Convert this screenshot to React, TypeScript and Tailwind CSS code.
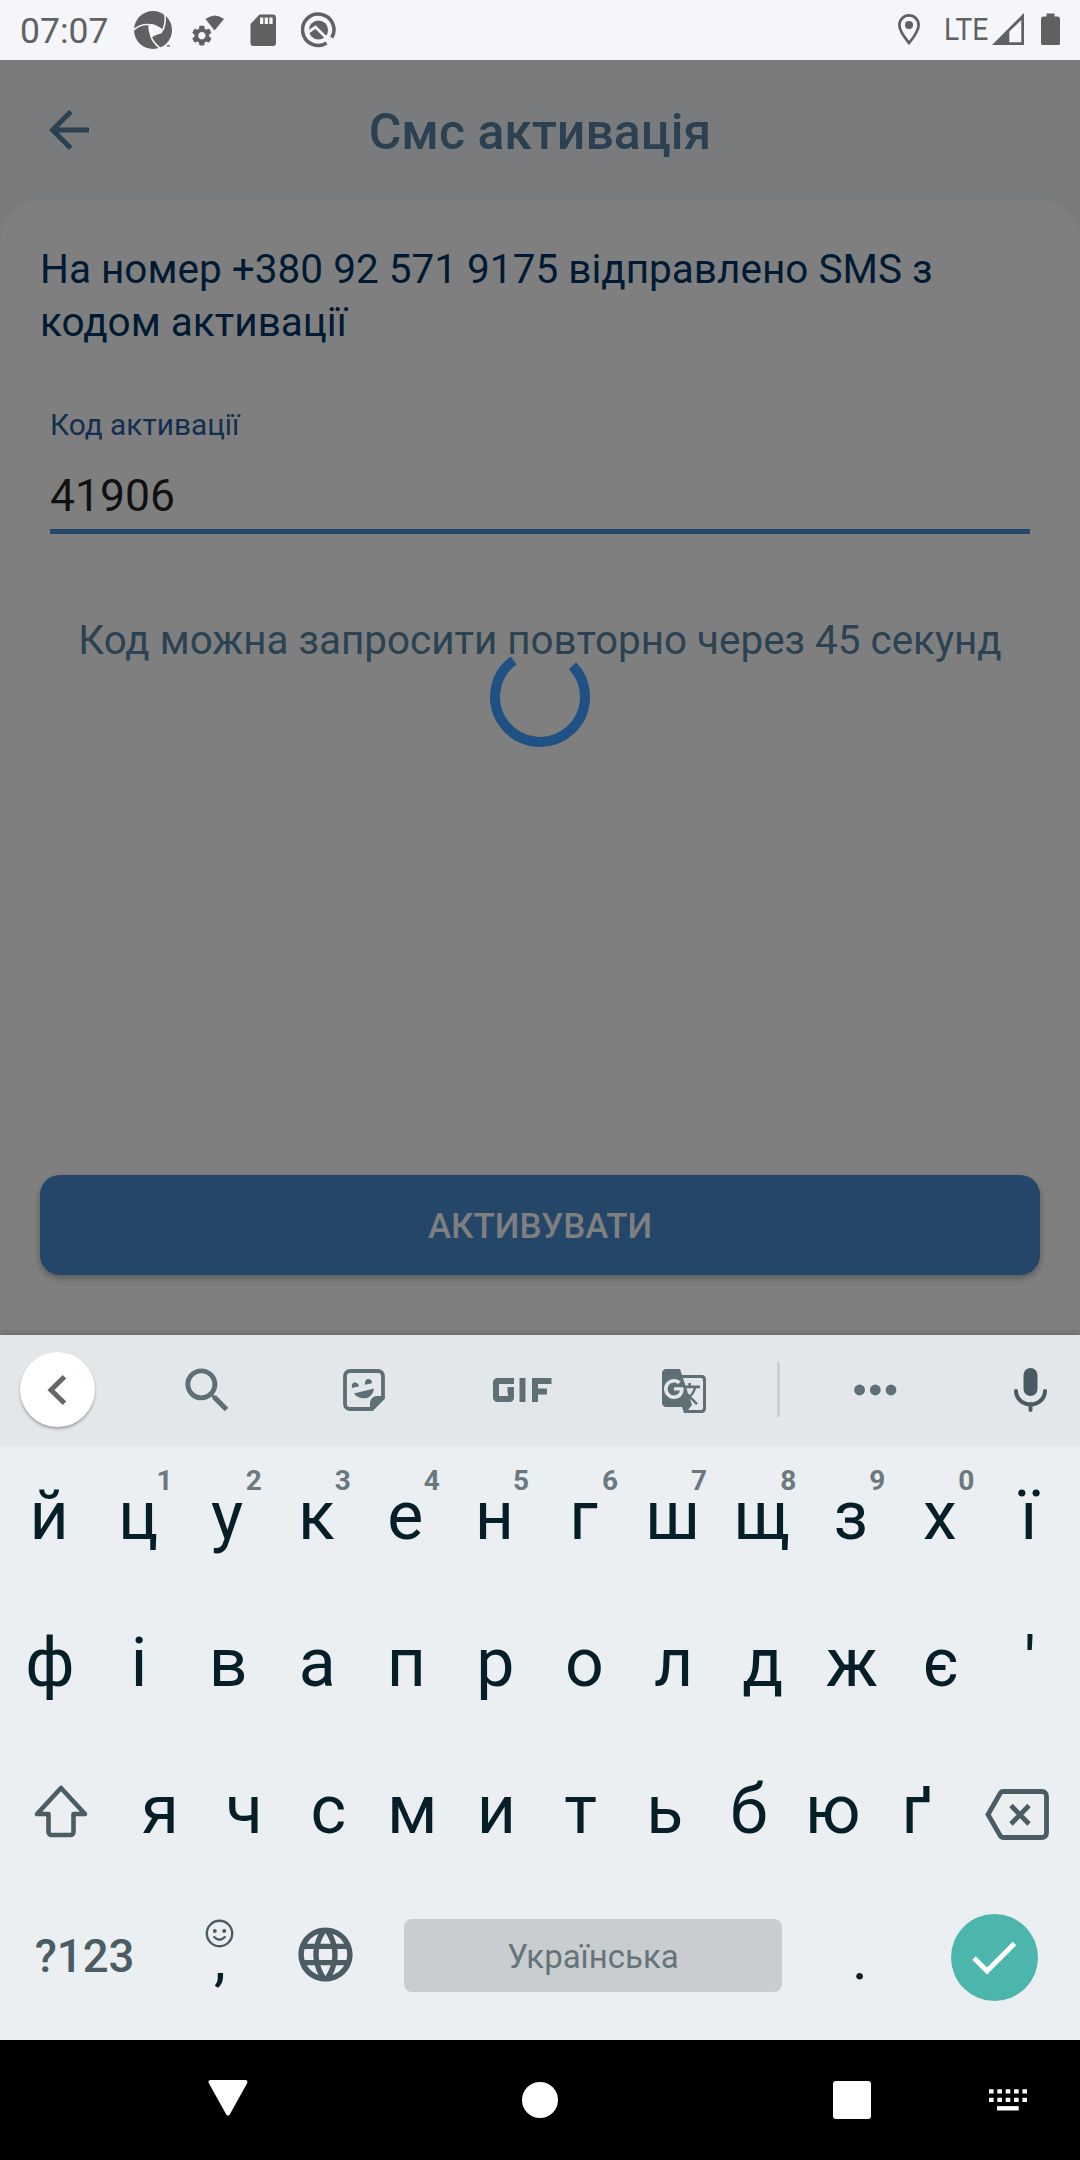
import React from 'react';
import { MdArrowBack, MdSearch, MdGTranslate, MdLanguage } from 'react-icons/md';

const row1 = [
  ['й', ''], ['ц', '1'], ['у', '2'], ['к', '3'], ['е', '4'], ['н', '5'],
  ['г', '6'], ['ш', '7'], ['щ', '8'], ['з', '9'], ['х', '0'], ['ї', ''],
];
const row2 = ['ф', 'і', 'в', 'а', 'п', 'р', 'о', 'л', 'д', 'ж', 'є', "'"];
const row3 = ['я', 'ч', 'с', 'м', 'и', 'т', 'ь', 'б', 'ю', 'ґ'];

function StatusBar() {
  return (
    <div className="flex h-[60px] items-start bg-[#f5f6fa] text-[#616163]">
      <span className="ml-5 mt-[11px] w-[92px] text-[35.5px] leading-10">07:07</span>
      <svg className="ml-[22px] mt-[11px] h-[38px] w-[38px]" viewBox="0 0 38 38">
        <circle cx="19" cy="19" r="19" fill="#616163" />
        <path d="M14.6 13.3Q20 11.6 29.2 18.6Q28.6 21.5 27.6 22.2Q22 23.4 17.2 26.6Q13.6 20 14.6 13.3Z" fill="#f5f6fa" />
        <path d="M-1 19.5Q6 13 15 13.6M30.6 3Q32.5 10 29 19.2M16.6 24Q18.5 32 28 38.5" fill="none" stroke="#f5f6fa" strokeWidth="1.6" />
        <path d="M32.5 34.5L38 31V38H29Z" fill="#f5f6fa" />
        <path d="M33 34.8h3" stroke="#616163" strokeWidth="1.4" />
      </svg>
      <svg className="ml-5 mt-[15px] h-[31px] w-[32px]" viewBox="0 0 32 31">
        <path d="M13.5 4Q23-3 32 4L22.5 15.5Z" fill="#616163" />
        <g transform="translate(-2.4 8.4) scale(1.02)">
          <path fill="#616163" d="M19.14 12.94c.04-.3.06-.61.06-.94 0-.32-.02-.64-.07-.94l2.03-1.58c.18-.14.23-.41.12-.61l-1.92-3.32c-.12-.22-.37-.29-.59-.22l-2.39.96c-.5-.38-1.03-.7-1.62-.94l-.36-2.54c-.04-.24-.24-.41-.48-.41h-3.84c-.24 0-.43.17-.47.41l-.36 2.54c-.59.24-1.13.57-1.62.94l-2.39-.96c-.22-.08-.47 0-.59.22L2.74 8.87c-.12.21-.08.47.12.61l2.03 1.58c-.05.3-.09.63-.09.94s.02.64.07.94l-2.03 1.58c-.18.14-.23.41-.12.61l1.92 3.32c.12.22.37.29.59.22l2.39-.96c.5.38 1.03.7 1.62.94l.36 2.54c.05.24.24.41.48.41h3.84c.24 0 .44-.17.47-.41l.36-2.54c.59-.24 1.13-.56 1.62-.94l2.39.96c.22.08.47 0 .59-.22l1.92-3.32c.12-.22.07-.47-.12-.61l-2.01-1.58zM12 15.6c-1.98 0-3.6-1.62-3.6-3.6s1.62-3.6 3.6-3.6 3.6 1.62 3.6 3.6-1.62 3.6-3.6 3.6z" />
        </g>
      </svg>
      <svg className="ml-[26px] mt-[14px] h-8 w-[26px]" viewBox="0 0 26 32">
        <path fillRule="evenodd" d="M9.5.5H23a3 3 0 0 1 3 3V29a3 3 0 0 1-3 3H3.5a3 3 0 0 1-3-3V10ZM10 3.5V10h3.3V3.5ZM14.7 3.5V10h3.3V3.5ZM19.3 3.5V10h3.3V3.5Z" fill="#616163" />
      </svg>
      <svg className="ml-[25px] mt-3 h-9 w-[36px]" viewBox="0 0 36 36">
        <path d="M25.6 31A15.7 15.7 0 1 1 30.8 25.6" fill="none" stroke="#616163" strokeWidth="3.6" />
        <circle cx="17.5" cy="18" r="9.6" fill="#616163" />
        <path d="M7.500 20L14.500 15L29.500 30" fill="none" stroke="#f5f6fa" strokeWidth="2.8" />
      </svg>
      <div className="grow" />
      <svg className="mr-[24px] mt-[14px] h-8 w-[22px]" viewBox="0 0 22 32">
        <path d="M11 1.4C5.7 1.4 1.4 5.6 1.4 11C1.4 18 11 29 11 29S20.6 18 20.6 11C20.6 5.6 16.3 1.4 11 1.4Z" fill="none" stroke="#616163" strokeWidth="2.7" />
        <circle cx="11" cy="11" r="4" fill="#616163" />
      </svg>
      <span className="mt-[9px] w-[48px] origin-left scale-x-[0.88] text-[32px] leading-10">LTE</span>
      <svg className="mt-[13px] h-8 w-8" viewBox="0 0 32 32">
        <path fillRule="evenodd" d="M0 32L32 0V32ZM17.3 18.5V29.2H29.3V7Z" fill="#616163" />
      </svg>
      <svg className="ml-[17px] mr-5 mt-[13px] h-8 w-[19px]" viewBox="0 0 19 32">
        <path d="M5.5 0.5h8V3.5h3a2.5 2.5 0 0 1 2.5 2.5V30a2.2 2.2 0 0 1-2.2 2.2H2.2A2.2 2.2 0 0 1 0 30V6a2.5 2.5 0 0 1 2.5-2.5h3Z" fill="#616163" />
      </svg>
    </div>
  );
}

function Screen() {
  return (
    <div className="relative flex h-[1275px] flex-col bg-[#7a7b7d]">
      <header className="flex h-[140px] items-center pl-[39px] pr-10 text-[#2b4151]">
        <MdArrowBack size={60} />
        <h1 className="grow pr-[59px] pt-1 text-center text-[50px] font-medium leading-[60px]">Смс активація</h1>
      </header>
      <main className="flex grow flex-col rounded-t-[41px] bg-[#7f7f7f] px-10 pt-[43px]">
        <p className="text-[40.53px] leading-[53.3px] text-[#001a33]">На номер +380 92 571 9175 відправлено SMS з кодом активації</p>
        <div className="mx-2.5 mt-[55px] border-b-[5px] border-[#24486c]">
          <div className="text-[29.8px] leading-10 text-[#132f4f]">Код активації</div>
          <div className="h-[84px] pt-6 text-[44.5px] leading-[54px] text-[#111111]">41906</div>
        </div>
        <p className="mt-[80px] text-center text-[40.4px] leading-[53px] text-[#2b4252]">Код можна запросити повторно через 45 секунд</p>
        <button className="mb-[60px] mt-auto h-[100px] rounded-[20px] bg-[#244769] pt-[5px] text-[34.9px] font-medium text-[#7f7f7f] shadow-[0_3px_6px_rgba(0,0,0,0.3)]">
          АКТИВУВАТИ
        </button>
      </main>
      <svg className="absolute left-[490px] top-[587px] h-[100px] w-[100px]" viewBox="0 0 100 100">
        <path d="M82.5 18.8A45 45 0 1 1 23.6 13.5" fill="none" stroke="#1f5184" strokeWidth="10" />
      </svg>
    </div>
  );
}

function Toolbar() {
  return (
    <div className="flex h-[110px] items-center bg-[#e3e7e9] pb-px text-[#5f6f76] shadow-[0_-2px_6px_rgba(0,0,0,0.15)]">
      <div className="ml-5 flex h-[75px] w-[75px] items-center justify-center rounded-full bg-white pr-px shadow-[0_2px_3px_rgba(0,0,0,0.3)]">
        <svg className="h-[30px] w-5" viewBox="0 0 20 30"><path d="M17.5 1.8L4 15L17.5 28.2" fill="none" stroke="#666" strokeWidth="5" /></svg>
      </div>
      <MdSearch size={59} className="ml-[83px] mt-0.5" />
      <svg className="ml-[106px] h-[42px] w-[42px]" viewBox="0 0 42 42">
        <path d="M7 2H35a5 5 0 0 1 5 5V29L29 40H7a5 5 0 0 1-5-5V7a5 5 0 0 1 5-5Z" fill="none" stroke="#5f6f76" strokeWidth="3.8" />
        <path d="M27 41V34a7 7 0 0 1 7-7H41V29.5L29.5 41ZM11 24.5L31 19.5C30 26 26 29.3 21 29.3C16.5 29.3 13 27.5 11 24.5ZM9 19C7.5 11 16 13 16 17.2ZM22 15.8C21 8 29.5 9 29 14.2Z" fill="#5f6f76" />
      </svg>
      <svg className="ml-[108px] h-6 w-[59px]" viewBox="0 0 59 24">
        <path d="M21 3H4.5a1.5 1.5 0 0 0-1.5 1.5V19.5a1.5 1.5 0 0 0 1.5 1.5H16.5a1.5 1.5 0 0 0 1.5-1.5V12H14.5M29.5 0V24M42 24V3H58.5M42 13.5H54" fill="none" stroke="#5f6f76" strokeWidth="6" />
      </svg>
      <MdGTranslate size={48} className="ml-[108px] mt-0.5" />
      <div className="ml-[69px] h-[55px] w-[3px] bg-[#cbcfd1]" />
      <svg className="ml-[74px] h-3 w-[44px]" viewBox="0 0 44 12"><g fill="#5f6f76"><circle cx="5.6" cy="6" r="5.4" /><circle cx="21.3" cy="6" r="5.4" /><circle cx="37" cy="6" r="5.4" /></g></svg>
      <svg className="ml-[116px] h-[46px] w-[33px]" viewBox="0 0 33 46">
        <rect x="9.5" y="1" width="14" height="28" rx="7" fill="#4a5a63" />
        <path d="M2 24a14.5 13.5 0 0 0 29 0M16.5 37V43" fill="none" stroke="#4a5a63" strokeWidth="4" strokeLinecap="round" />
      </svg>
    </div>
  );
}

function Keyboard() {
  return (
    <div className="relative h-[705px] bg-[#ebeff2] text-[#051e28]">
      <Toolbar />
      <div className="flex h-[147px] pl-[4.5px] pr-[6.5px]">
        {row1.map(([k, n]) => (
          <div key={k} className="relative flex flex-1 items-center justify-center pb-[5px] text-[68px] leading-none">
            {k}
            <span className="absolute left-[63px] top-[19px] text-[28px] font-bold leading-[34px] text-[#6b797f]">{n}</span>
          </div>
        ))}
      </div>
      <div className="flex h-[147px] px-[5.5px] pb-[5px]">
        {row2.map((k) => (
          <div key={k} className="flex flex-1 items-center justify-center text-[68px] leading-none">{k}</div>
        ))}
      </div>
      <div className="flex h-[147px] pb-[5px]">
        <div className="flex w-[118px] justify-center pt-[45px]">
          <svg className="ml-[3px] h-[56px] w-[58px]" viewBox="0 0 58 56">
            <path d="M29 4L5 30H16.5V48a3 3 0 0 0 3 3H38.5a3 3 0 0 0 3-3V30H53Z" fill="none" stroke="#4b5c64" strokeWidth="4.6" strokeLinejoin="round" />
          </svg>
        </div>
        {row3.map((k) => (
          <div key={k} className="flex w-[84.1px] items-center justify-center text-[68px] leading-none">{k}</div>
        ))}
        <svg className="ml-[26px] mt-[50px] h-[51px] w-[64px]" viewBox="0 0 64 51">
          <path d="M18 2.5H57a4.5 4.5 0 0 1 4.5 4.5V44a4.5 4.5 0 0 1-4.5 4.5H18a3 3 0 0 1-2.5-1.3L3 25.5L15.5 3.8A3 3 0 0 1 18 2.5ZM26 16.5L44 35M44 16.5L26 35" fill="none" stroke="#4b5c64" strokeWidth="4.8" />
        </svg>
      </div>
      <div className="flex h-[154px] items-start">
        <span className="mt-12 w-[169px] text-center text-[45.5px] font-medium leading-[46px] text-[#4b5c64]">?123</span>
        <div className="flex w-[100px] flex-col items-center pt-[33px]">
          <svg className="h-[29px] w-[29px]" viewBox="0 0 29 29">
            <circle cx="14.5" cy="14.5" r="12.7" fill="none" stroke="#4b5c64" strokeWidth="2.4" />
            <circle cx="9.8" cy="12" r="2" fill="#4b5c64" /><circle cx="19.2" cy="12" r="2" fill="#4b5c64" />
            <path d="M9.2 18Q14.5 23.5 19.8 18" fill="none" stroke="#4b5c64" strokeWidth="2.4" strokeLinecap="round" />
          </svg>
          <span className="-mt-[19px] pl-0.5 text-[60px] leading-[60px]">,</span>
        </div>
        <div className="flex w-[112px] justify-center pt-9">
          <MdLanguage size={65} color="#4b5c64" />
        </div>
        <div className="ml-[23px] mt-[33px] flex h-[73px] w-[378px] items-center justify-center rounded-lg bg-[#c9cdd0] pt-0.5 text-[33px] text-[#66747a]">Українська</div>
        <span className="mt-[43px] w-[156px] text-center text-[60px] leading-[60px]">.</span>
        <div className="ml-[13px] mt-7 flex h-[87px] w-[87px] items-center justify-center rounded-full bg-[#4db6ac]">
          <svg className="h-[34px] w-[45px]" viewBox="0 0 45 34"><path d="M2 17L15 30L42.5 2.5" fill="none" stroke="#fff" strokeWidth="5" /></svg>
        </div>
      </div>
    </div>
  );
}

function NavBar() {
  return (
    <div className="flex h-[120px] items-center bg-black">
      <svg className="ml-[208px] mb-[5px] h-9 w-10" viewBox="0 0 40 36"><path d="M2.5 2H37.5L20 33.5Z" fill="#fff" stroke="#fff" strokeWidth="4" strokeLinejoin="round" /></svg>
      <div className="ml-[274px] h-9 w-9 rounded-full bg-white" />
      <div className="ml-[275px] h-[38px] w-[38px] rounded-[3px] bg-white" />
      <svg className="ml-[118px] h-[22px] w-[38px]" viewBox="0 0 38 22">
        <path d="M0 2.3H38M0 10.8H38" stroke="#fff" strokeWidth="4.3" strokeDasharray="4.6 3.75" />
        <path d="M8 19.3H29.7" stroke="#fff" strokeWidth="4.4" />
      </svg>
    </div>
  );
}

export default function App() {
  return (
    <div className="h-[2160px] w-[1080px] overflow-hidden font-['Roboto',sans-serif]">
      <StatusBar />
      <Screen />
      <Keyboard />
      <NavBar />
    </div>
  );
}
